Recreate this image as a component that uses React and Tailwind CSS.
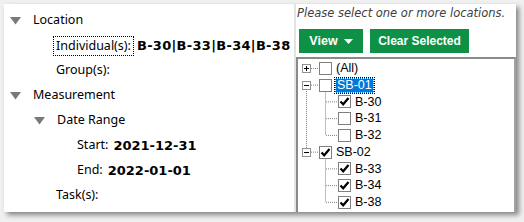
import React from "react";

const ui = { fontFamily: '"Noto Sans", "Open Sans", sans-serif' };
const tree = { fontFamily: '"Liberation Sans", Arial, sans-serif' };
const strong = { fontFamily: '"DejaVu Sans", Verdana, sans-serif' };

function Caret() {
  return (
    <svg width="11" height="8" viewBox="0 0 11 8" className="shrink-0">
      <path d="M0 0 H11 L5.5 7.5 Z" fill="#7a7a7a" />
    </svg>
  );
}

function Row({ indent = "", caret, children }) {
  return (
    <div className={`flex items-center h-[25px] ${indent}`}>
      {caret && <span className="w-[23px] flex"><Caret /></span>}
      {children}
    </div>
  );
}

function Check({ on }) {
  return (
    <span className="w-[13px] h-[13px] border border-[#808080] bg-white flex items-center justify-center shrink-0">
      {on && (
        <svg width="11" height="11" viewBox="0 0 11 11">
          <path d="M1.5 5.5 L4.2 8.3 L9.5 2" fill="none" stroke="#000" strokeWidth="2.2" />
        </svg>
      )}
    </span>
  );
}

function Expander({ open }) {
  return (
    <span className="w-[9px] h-[9px] border border-[#919191] bg-white relative shrink-0">
      <span className="absolute left-[1px] top-[3px] w-[5px] h-px bg-black" />
      {!open && <span className="absolute left-[3px] top-[1px] w-px h-[5px] bg-black" />}
    </span>
  );
}

const nodes = [
  { level: 0, label: "(All)", exp: "closed", on: false },
  { level: 0, label: "SB-01", exp: "open", on: false, sel: true },
  { level: 1, label: "B-30", on: true },
  { level: 1, label: "B-31", on: false },
  { level: 1, label: "B-32", on: false },
  { level: 0, label: "SB-02", exp: "open", on: true },
  { level: 1, label: "B-33", on: true },
  { level: 1, label: "B-34", on: true },
  { level: 1, label: "B-38", on: true },
];

const ROW = 16.75;

export default function App() {
  return (
    <div className="w-[524px] h-[222px] bg-[#f0f0f0] pt-[4px] pl-[4px] overflow-hidden">
      <div className="w-[512px] h-[208px] bg-white flex shadow-[3px_3px_5px_rgba(0,0,0,0.45)] text-[12.5px] text-black" style={ui}>
        <div className="w-[292px] shrink-0 border-r-2 border-[#e3e3e3] pt-[4px] pl-[6px]">
          <Row caret>Location</Row>
          <Row indent="pl-[43px]">
            <span className="border border-dotted border-black px-[2px] leading-[18px]">Individual(s):</span>
            <span className="font-bold ml-[3px] text-[13px] tracking-[0.3px]" style={strong}>B-30|B-33|B-34|B-38</span>
          </Row>
          <Row indent="pl-[46px]">Group(s):</Row>
          <Row caret>Measurement</Row>
          <Row indent="pl-[24px]" caret>Date Range</Row>
          <Row indent="pl-[67px]">
            Start:<span className="font-bold ml-[5px] text-[13px]" style={strong}>2021-12-31</span>
          </Row>
          <Row indent="pl-[67px]">
            End:<span className="font-bold ml-[5px] text-[13px]" style={strong}>2022-01-01</span>
          </Row>
          <Row indent="pl-[46px]">Task(s):</Row>
        </div>
        <div className="flex-1 flex flex-col">
          <div className="h-[20px] flex items-center pl-[1px] text-[11.5px] italic text-[#404040]" style={strong}>
            Please select one or more locations.
          </div>
          <div className="flex gap-[7px] pl-[3px] h-[24px] mt-[5px]" style={tree}>
            <button className="w-[64px] bg-[#0e9146] text-white font-bold text-[12.5px] flex items-center justify-center gap-[6px]">
              View
              <svg width="9" height="5" viewBox="0 0 9 5"><path d="M0 0 H9 L4.5 5 Z" fill="#fff" /></svg>
            </button>
            <button className="w-[99px] bg-[#0e9146] text-white font-bold text-[12px]">Clear Selected</button>
          </div>
          <div className="mt-[4px] flex-1 border-2 border-b-0 border-t-[#8a8a8a] border-l-[#8a8a8a] border-r-[#a0a0a0] relative text-[12.5px]" style={tree}>
            <svg className="absolute inset-0" width="216" height="150">
              <g stroke="#808080" strokeDasharray="1 1" strokeWidth="1" fill="none">
                <line x1="13" y1="9.5" x2="21" y2="9.5" />
                <line x1="13" y1={ROW * 1.5 + 1} x2="21" y2={ROW * 1.5 + 1} />
                <line x1="8.5" y1={ROW * 1.5 + 5} x2="8.5" y2={ROW * 5.5 - 3} />
                <line x1="13" y1={ROW * 5.5 + 1} x2="21" y2={ROW * 5.5 + 1} />
                <line x1="27.5" y1={ROW * 2 - 1} x2="27.5" y2={ROW * 4.5 + 1} />
                <line x1="27.5" y1={ROW * 6 - 1} x2="27.5" y2={ROW * 8.5 + 1} />
                {[2, 3, 4, 6, 7, 8].map((i) => (
                  <line key={i} x1="28" y1={ROW * (i + 0.5) + 1} x2="40" y2={ROW * (i + 0.5) + 1} />
                ))}
              </g>
            </svg>
            <div className="relative pt-[1px]">
              {nodes.map((n) => (
                <div key={n.label} className="flex items-center h-[16.75px]">
                  {n.level === 0 ? (
                    <>
                      <span className="w-[4px]" />
                      <Expander open={n.exp === "open"} />
                      <span className="w-[8px]" />
                    </>
                  ) : (
                    <span className="w-[40px]" />
                  )}
                  <Check on={n.on} />
                  {n.sel ? (
                    <span className="ml-[3px] px-[1px] bg-[#0078d7] text-white border border-dotted border-[#ffffff] outline outline-1 outline-dotted outline-black leading-[13px]">
                      {n.label}
                    </span>
                  ) : (
                    <span className="ml-[4px]">{n.label}</span>
                  )}
                </div>
              ))}
            </div>
          </div>
        </div>
      </div>
    </div>
  );
}
